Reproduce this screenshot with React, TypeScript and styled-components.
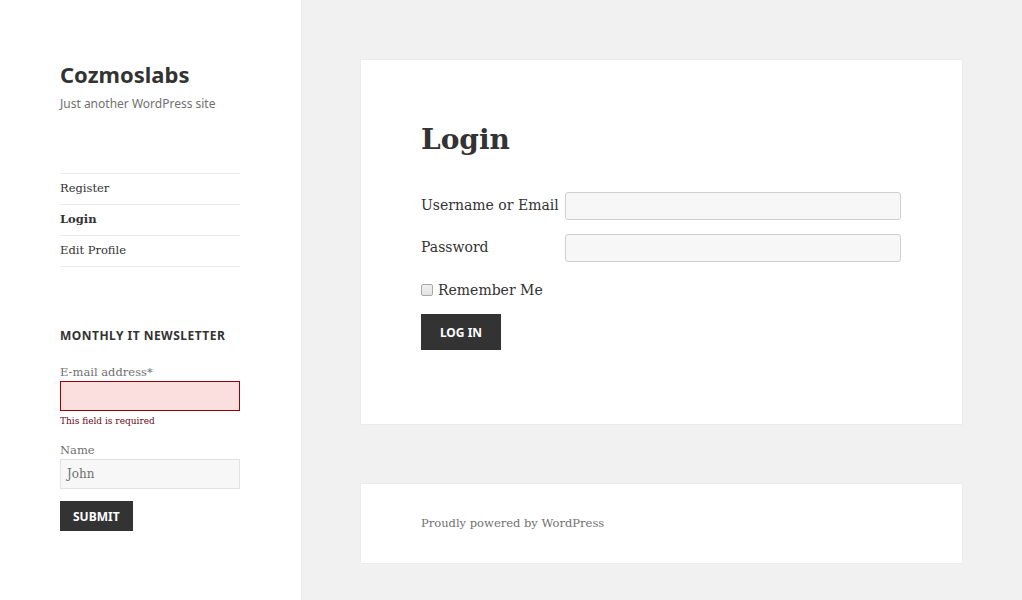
import React from "react";
import styled, { createGlobalStyle } from "styled-components";

const GlobalStyle = createGlobalStyle`
  html, body { margin: 0; padding: 0; }
  body {
    background: #f1f1f1;
    color: #333333;
    font-family: "DejaVu Serif", "Liberation Serif", serif;
  }
  * { box-sizing: border-box; }
`;

const serif = `"DejaVu Serif", "Liberation Serif", serif`;
const sans = `"Noto Sans", "Open Sans", sans-serif`;

const Page = styled.div`
  display: flex;
  min-height: 600px;
`;

const Sidebar = styled.aside`
  width: 301px;
  flex: none;
  background: #ffffff;
  box-shadow: 0 0 1px rgba(0, 0, 0, 0.15);
  padding: 59px 61px 40px 60px;
`;

const SiteTitle = styled.div`
  font-family: ${sans};
  font-weight: 700;
  font-size: 22px;
  line-height: 30px;
  color: #333333;
`;

const Tagline = styled.div`
  font-family: ${sans};
  font-size: 12px;
  line-height: 18px;
  color: #707070;
  margin-top: 6px;
`;

const Nav = styled.ul`
  list-style: none;
  margin: 60px 0 0;
  padding: 0;
  border-bottom: 1px solid #eaeaea;
`;

const NavItem = styled.li<{ $current?: boolean }>`
  border-top: 1px solid #eaeaea;
  padding: 4px 0 6px;
  font-family: ${serif};
  font-size: 11.5px;
  line-height: 20px;
  font-weight: ${(p) => (p.$current ? 700 : 400)};
  color: #333333;
`;

const Widget = styled.section`
  margin-top: 59px;
`;

const WidgetTitle = styled.h2`
  margin: 0 0 17px;
  font-family: ${sans};
  font-weight: 700;
  font-size: 12px;
  line-height: 20px;
  letter-spacing: 0.04em;
  text-transform: uppercase;
  color: #333333;
`;

const FieldLabel = styled.div`
  font-family: ${serif};
  font-size: 11.5px;
  line-height: 18px;
  color: #707070;
`;

const SideInput = styled.div<{ $error?: boolean }>`
  height: 30px;
  width: 180px;
  border: 1px solid ${(p) => (p.$error ? "#990000" : "#e2e2e2")};
  background: ${(p) => (p.$error ? "#fbdede" : "#f7f7f7")};
  font-family: ${serif};
  font-size: 12px;
  line-height: 28px;
  color: #707070;
  padding: 0 6px;
`;

const ErrorText = styled.div`
  font-family: ${serif};
  font-size: 9px;
  line-height: 14px;
  color: #6b0a1a;
  margin: 3px 0 13px;
`;

const SubmitButton = styled.button`
  margin-top: 12px;
  height: 30px;
  padding: 0 13px;
  border: none;
  background: #333333;
  color: #ffffff;
  font-family: ${sans};
  font-weight: 700;
  font-size: 12px;
  text-transform: uppercase;
`;

const Main = styled.main`
  flex: 1;
  padding: 60px 60px 36px;
  display: flex;
  flex-direction: column;
  gap: 60px;
`;

const Card = styled.div`
  background: #ffffff;
  box-shadow: 0 0 1px rgba(0, 0, 0, 0.15);
`;

const Article = styled(Card)`
  padding: 60px 60px 74px;
`;

const EntryTitle = styled.h1`
  margin: 0 0 32px;
  font-family: ${serif};
  font-weight: 700;
  font-size: 28px;
  line-height: 40px;
  color: #333333;
`;

const Form = styled.div`
  width: 480px;
  display: flex;
  flex-direction: column;
`;

const Row = styled.div`
  display: flex;
  align-items: center;
  height: 28px;
  margin-bottom: 14px;
`;

const RowLabel = styled.label`
  width: 144px;
  flex: none;
  font-family: ${serif};
  font-size: 14px;
  line-height: 18px;
  padding-bottom: 2px;
  color: #333333;
  white-space: nowrap;
`;

const TextInput = styled.input`
  width: 336px;
  height: 28px;
  border: 1px solid #cfcfcf;
  border-radius: 3px;
  background: #f7f7f7;
  padding: 0 6px;
  outline: none;
`;

const CheckRow = styled.label`
  display: flex;
  align-items: center;
  gap: 5px;
  height: 28px;
  font-family: ${serif};
  font-size: 14px;
  line-height: 18px;
  color: #333333;
  margin-bottom: 10px;
`;

const Check = styled.input`
  appearance: none;
  margin: 0 0 1px;
  width: 12px;
  height: 12px;
  border: 1px solid #a9a9a9;
  border-radius: 2px;
  background: linear-gradient(#f0f0f0, #e2e2e2);
`;

const LoginButton = styled.button`
  width: 80px;
  height: 36px;
  border: none;
  background: #333333;
  color: #ffffff;
  font-family: ${sans};
  font-weight: 700;
  font-size: 12px;
  text-transform: uppercase;
  padding: 0;
`;

const Footer = styled(Card)`
  padding: 0 60px 2px;
  height: 79px;
  display: flex;
  align-items: center;
  font-family: ${serif};
  font-size: 11.5px;
  color: #707070;
`;

export default function App() {
  return (
    <>
      <GlobalStyle />
      <Page>
        <Sidebar>
          <SiteTitle>Cozmoslabs</SiteTitle>
          <Tagline>Just another WordPress site</Tagline>
          <Nav>
            <NavItem>Register</NavItem>
            <NavItem $current>Login</NavItem>
            <NavItem>Edit Profile</NavItem>
          </Nav>
          <Widget>
            <WidgetTitle>Monthly IT Newsletter</WidgetTitle>
            <FieldLabel>E-mail address*</FieldLabel>
            <SideInput $error />
            <ErrorText>This field is required</ErrorText>
            <FieldLabel>Name</FieldLabel>
            <SideInput>John</SideInput>
            <SubmitButton>Submit</SubmitButton>
          </Widget>
        </Sidebar>
        <Main>
          <Article>
            <EntryTitle>Login</EntryTitle>
            <Form>
              <Row>
                <RowLabel>Username or Email</RowLabel>
                <TextInput type="text" />
              </Row>
              <Row>
                <RowLabel>Password</RowLabel>
                <TextInput type="password" />
              </Row>
              <CheckRow>
                <Check type="checkbox" />
                Remember Me
              </CheckRow>
              <div>
                <LoginButton>Log In</LoginButton>
              </div>
            </Form>
          </Article>
          <Footer>Proudly powered by WordPress</Footer>
        </Main>
      </Page>
    </>
  );
}
